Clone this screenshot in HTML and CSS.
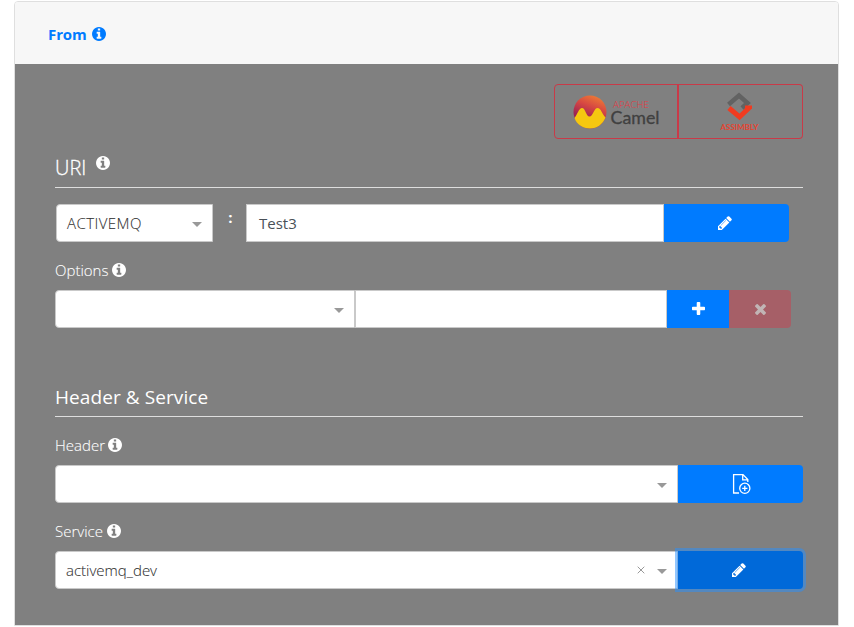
FILE: index.html
```html
<!DOCTYPE html>
<html lang="en">
<head>
<meta charset="utf-8">
<title>From</title>
<link rel="stylesheet" href="styles.css">
</head>
<body>
<svg class="defs" width="0" height="0">
  <symbol id="info" viewBox="0 128 1536 1536"><path d="M1024 1376v-160q0-14-9-23t-23-9h-96v-512q0-14-9-23t-23-9h-320q-14 0-23 9t-9 23v160q0 14 9 23t23 9h96v320h-96q-14 0-23 9t-9 23v160q0 14 9 23t23 9h448q14 0 23-9t9-23zm-128-896v-160q0-14-9-23t-23-9h-192q-14 0-23 9t-9 23v160q0 14 9 23t23 9h192q14 0 23-9t9-23zm640 416q0 209-103 385.500t-279.500 279.500-385.500 103-385.500-103-279.500-279.500-103-385.500 103-385.500 279.500-279.500 385.500-103 385.500 103 279.500 279.500 103 385.500z"/></symbol>
  <symbol id="pencil" viewBox="0 128 1536 1536"><path d="M363 1536l91-91-235-235-91 91v107h128v128h107zm523-928q0-22-22-22-10 0-17 7l-542 542q-7 7-7 17 0 22 22 22 10 0 17-7l542-542q7-7 7-17zm-54-192l416 416-832 832h-416v-416zm683 96q0 53-37 90l-166 166-416-416 166-165q36-38 90-38 53 0 91 38l235 234q37 39 37 91z"/></symbol>
  <symbol id="plus" viewBox="0 128 1408 1408"><path d="M1408 736v192q0 40-28 68t-68 28h-416v416q0 40-28 68t-68 28h-192q-40 0-68-28t-28-68v-416h-416q-40 0-68-28t-28-68v-192q0-40 28-68t68-28h416v-416q0-40 28-68t68-28h192q40 0 68 28t28 68v416h416q40 0 68 28t28 68z"/></symbol>
  <symbol id="times" viewBox="110 366 1188 1188"><path d="M1298 1322q0 40-28 68l-136 136q-28 28-68 28t-68-28l-294-294-294 294q-28 28-68 28t-68-28l-136-136q-28-28-28-68t28-68l294-294-294-294q-28-28-28-68t28-68l136-136q28-28 68-28t68 28l294 294 294-294q28-28 68-28t68 28l136 136q28 28 28 68t-28 68l-294 294 294 294q28 28 28 68z"/></symbol>
</svg>

<div class="card">
  <div class="card-header"><a class="from">From</a><svg class="info blue"><use href="#info"/></svg></div>
  <div class="card-body">
    <div class="logos">
      <button class="logo-btn camel">
        <svg width="90" height="40" viewBox="0 0 90 40">
          <defs><linearGradient id="sun" x1="0.700" y1="0" x2="0.300" y2="1"><stop offset="0" stop-color="#ee7b35"/><stop offset="0.350" stop-color="#d64742"/><stop offset="0.700" stop-color="#9d2455"/></linearGradient></defs>
          <circle cx="18" cy="20" r="16.500" fill="url(#sun)"/>
          <path d="M2.500 26C5 23 7 16 10 16C13.500 16 14 24.500 17.500 24.500C21 24.500 22 16 25.500 16C29 16 30 22 33.500 25.500C31 32 25.500 36.500 18 36.500C10.500 36.500 4.500 32 2.500 26Z" fill="#f5c810"/>
          <text x="41" y="16" class="apache" textLength="36" lengthAdjust="spacingAndGlyphs">APACHE</text>
          <text x="38.500" y="32" class="camel-word" textLength="49" lengthAdjust="spacingAndGlyphs">Camel</text>
        </svg>
      </button>
      <button class="logo-btn assimbly">
        <svg width="44" height="42" viewBox="0 0 44 42">
          <path d="M10.500 13.500L21 4.500L29.500 12L24 17" fill="none" stroke="#626262" stroke-width="4.500"/>
          <path d="M11 17L21.500 26L31.500 16.500" fill="none" stroke="#f03b20" stroke-width="5"/>
          <path d="M27 14.500H34V18H27Z" fill="#f03b20"/>
          <text x="2.500" y="38.500" class="assimbly-word" textLength="38" lengthAdjust="spacingAndGlyphs">ASSIMBLY</text>
        </svg>
      </button>
    </div>

    <h4 class="section uri"><span>URI</span><svg class="info raised"><use href="#info"/></svg></h4>
    <div class="row uri-row">
      <div class="select scheme"><span class="value activemq">ACTIVEMQ</span><i class="caret"></i></div>
      <span class="colon">:</span>
      <div class="input path"><span class="test">Test3</span></div>
      <button class="btn wide"><svg class="pencil"><use href="#pencil"/></svg></button>
    </div>

    <div class="label options"><span>Options</span><svg class="info"><use href="#info"/></svg></div>
    <div class="row">
      <div class="select option-key"><i class="caret"></i></div>
      <div class="input option-value"></div>
      <button class="btn add"><svg class="plus"><use href="#plus"/></svg></button>
      <button class="btn remove" disabled><svg class="times"><use href="#times"/></svg></button>
    </div>

    <h4 class="section service-section"><span>Header &amp; Service</span></h4>
    <div class="label header"><span>Header</span><svg class="info"><use href="#info"/></svg></div>
    <div class="row">
      <div class="select grow"><i class="caret"></i></div>
      <button class="btn wide">
        <svg class="file-plus" width="20" height="22" viewBox="0 0 20 22"><path d="M7 20H1.600V1.600H11L15.800 6.500V9M10.700 1.800V6.800H15.600"/><circle cx="12.800" cy="15.300" r="5.100"/><path d="M12.800 12.700V17.900M10.200 15.300H15.400"/></svg>
      </button>
    </div>

    <div class="label service"><span>Service</span><svg class="info"><use href="#info"/></svg></div>
    <div class="row">
      <div class="select grow"><span class="value dev">activemq_dev</span><svg class="clear" viewBox="0 0 8 8"><path d="M0.700 0.700L7.300 7.300M7.300 0.700L0.700 7.300"/></svg><i class="caret"></i></div>
      <button class="btn wide focused"><svg class="pencil"><use href="#pencil"/></svg></button>
    </div>
  </div>
</div>
</body>
</html>
```
FILE: styles.css
```css
* { box-sizing: border-box; }
body {
  margin: 0;
  padding: 1px 15px 0 14px;
  background: #fff;
  font: 300 15px/22px "Open Sans", "Noto Sans", sans-serif;
  overflow: hidden;
}
svg { display: block; flex: none; }
.defs { position: absolute; }
button { font: inherit; margin: 0; padding: 0; border: 0; }
.card {
  height: 625px;
  border: 1px solid #dfdfdf;
  border-radius: 4px 4px 0 0;
  overflow: hidden;
}
.card-header {
  height: 62px;
  padding: 1px 0 0 33px;
  display: flex;
  align-items: center;
  gap: 5px;
  background: #f7f7f7;
}
.from { color: #007bff; font-weight: 700; font-size: 15px; letter-spacing: -0.100px; }
.info { width: 14px; height: 14px; fill: #fff; }
.info.blue { fill: #007bff; }
.card-body { height: 561px; padding: 20px 35px 0 40px; background: #808080; color: #fff; }
.logos { display: flex; justify-content: flex-end; height: 55px; }
.logo-btn {
  width: 125px;
  display: flex;
  align-items: center;
  justify-content: center;
  border: 1px solid #c93a48;
  background: transparent;
}
.camel { width: 124px; padding-left: 2px; border-radius: 4px 0 0 4px; }
.assimbly { width: 126px; border-radius: 0 4px 4px 0; margin-left: -1px; border-left-width: 2px; }
.assimbly svg { margin-right: 2px; }
.apache { font: 300 9px "Open Sans", sans-serif; fill: #e43844; }
.camel-word { font: 400 17.500px Lato, sans-serif; fill: #404040; stroke: #404040; stroke-width: 0.300px; }
.assimbly-word { font: 700 6.500px Lato, sans-serif; fill: #e84430; }
.section {
  height: 49px;
  margin: 0 0 16px;
  padding-top: 17px;
  display: flex;
  border-bottom: 1px solid #dedede;
  font-weight: 400;
  font-size: 19px;
  line-height: 24px;
}
.uri { gap: 10px; }
.uri span { font-weight: 300; font-size: 20px; -webkit-text-stroke: 0.300px #fff; }
.raised { margin-top: 0; }
.row { display: flex; height: 38px; }
.uri-row { margin-left: 1px; }
.select, .input {
  height: 38px;
  display: flex;
  align-items: center;
  border: 1px solid #c9c9c9;
  background: #fff;
  color: #333;
}
.select { padding: 0 10px; border-radius: 4px 0 0 4px; }
.value { flex: 1; -webkit-text-stroke: 0.100px #333; }
.activemq { letter-spacing: 0.450px; }
.caret {
  margin: 3px 0 0 auto;
  border: 5px solid transparent;
  border-top-color: #999;
  border-bottom: 0;
}
.scheme { width: 157px; }
.colon { width: 35px; margin-right: -2px; text-align: center; line-height: 26px; font-weight: 700; }
.path { width: 418px; padding-left: 12px; font-weight: 400; color: #495057; }
.btn {
  display: flex;
  align-items: center;
  justify-content: center;
  background: #007bff;
}
.wide { width: 125px; border-radius: 0 4px 4px 0; }
.pencil { width: 14px; height: 14px; margin-right: 4px; fill: #fff; }
.label { height: 22px; margin: 17px 0 9px; display: flex; align-items: center; gap: 4px; }
.label span { -webkit-text-stroke: 0.100px #fff; }
.option-key { width: 300px; }
.option-value { width: 312px; }
.add { width: 62px; }
.remove { width: 62px; background: #a65f67; border-radius: 0 4px 4px 0; }
.plus { width: 13px; height: 13px; margin-bottom: 1px; fill: #fff; }
.times { width: 11px; height: 11px; margin-top: 1px; fill: #c1b5b5; }
.service-section { margin-top: 40px; padding-top: 17px; }
.service-section span { letter-spacing: 0.080px; }
.header { gap: 3px; }
.grow { flex: 1; }
.file-plus { margin-left: 2px; fill: none; stroke: #fff; stroke-width: 1.300px; }
.clear { width: 8px; height: 8px; margin-right: 12px; fill: none; stroke: #999; }
.focused { background: #0069d9; box-shadow: 0 0 0 3px rgba(38, 143, 255, 0.500); }
```
